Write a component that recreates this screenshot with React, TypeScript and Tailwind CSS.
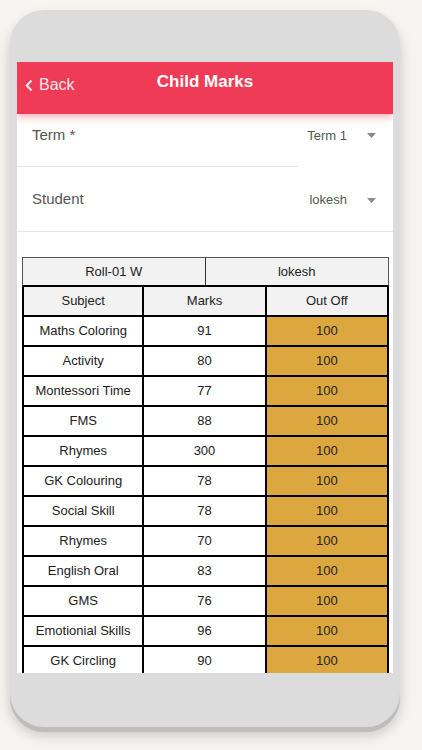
const rows: [string, string][] = [
  ["Maths Coloring", "91"],
  ["Activity", "80"],
  ["Montessori Time", "77"],
  ["FMS", "88"],
  ["Rhymes", "300"],
  ["GK Colouring", "78"],
  ["Social Skill", "78"],
  ["Rhymes", "70"],
  ["English Oral", "83"],
  ["GMS", "76"],
  ["Emotionial Skills", "96"],
  ["GK Circling", "90"],
];

function Caret() {
  return (
    <svg width="9" height="5" viewBox="0 0 9 5" className="fill-[#8a8a8a]">
      <path d="M0 0h9L4.5 5z" />
    </svg>
  );
}

export default function App() {
  return (
    <div
      className="w-[422px] h-[750px] bg-[#f7f5f1] pt-[10px] pl-[10px] overflow-hidden"
      style={{ fontFamily: '"Liberation Sans", Arial, sans-serif' }}
    >
      <div className="w-[390px] h-[717px] rounded-[34px] bg-[#dcdcdc] pt-[52px] px-[7px] shadow-[0_5px_0_#bdbdbd,0_8px_14px_rgba(0,0,0,0.2)]">
        <div className="h-[611px] bg-white overflow-hidden">
          <div className="relative h-[52px] bg-[#ef3b55] shadow-[0_4px_7px_rgba(239,59,85,0.35)]">
            <div className="flex items-center gap-[6px] pl-[8px] pt-[11px] text-[#fde5e9] text-[16px] leading-[24px]">
              <svg width="8" height="13" viewBox="0 0 8 13" fill="none" stroke="currentColor" strokeWidth="2.2">
                <path d="M6.5 1.5L1.8 6.5l4.7 5" />
              </svg>
              <span>Back</span>
            </div>
            <div className="absolute inset-x-0 top-[8px] text-center text-white font-bold text-[17px] leading-[24px]">Child Marks</div>
          </div>

          <div className="h-[53px] relative">
            <div className="flex justify-between items-start pt-[10px] pl-[15px] pr-[17px]">
              <span className="text-[15px] text-[#555]">Term *</span>
              <div className="flex items-center gap-[20px] pt-[2px]">
                <span className="text-[13px] text-[#555]">Term 1</span>
                <Caret />
              </div>
            </div>
            <div className="absolute left-0 bottom-0 w-[281px] border-b border-[#e6e6e6]" />
          </div>

          <div className="h-[65px] border-b border-[#e6e6e6] flex justify-between items-center pl-[15px] pr-[17px]">
            <span className="text-[15px] text-[#555]">Student</span>
            <div className="flex items-center gap-[20px] pt-[2px]">
              <span className="text-[13px] text-[#555]">lokesh</span>
              <Caret />
            </div>
          </div>

          <div className="pt-[25px] pl-[5px] w-[372px]">
            <div className="grid grid-cols-2 h-[30px] bg-[#f2f2f2] border border-[#555] border-b-2 border-b-black text-[13px] text-[#222]">
              <div className="flex items-center justify-center border-r border-[#333]">Roll-01 W</div>
              <div className="flex items-center justify-center">lokesh</div>
            </div>
            <div className="grid grid-cols-3 h-[30px] bg-[#f2f2f2] text-[13px] text-[#222]">
              <div className="flex items-center justify-center border-l-2 border-r-2 border-b-2 border-black">Subject</div>
              <div className="flex items-center justify-center border-r-2 border-b-2 border-black">Marks</div>
              <div className="flex items-center justify-center border-r-2 border-b-2 border-black">Out Off</div>
            </div>
            {rows.map(([subject, mark], i) => (
              <div key={i} className="grid grid-cols-3 h-[30px] text-[13px] text-[#222]">
                <div className="flex items-center justify-center border-l-2 border-r-2 border-b-2 border-black whitespace-nowrap">{subject}</div>
                <div className="flex items-center justify-center border-r-2 border-b-2 border-black">{mark}</div>
                <div className="flex items-center justify-center border-r-2 border-b-2 border-black bg-[#dca73f]">100</div>
              </div>
            ))}
          </div>
        </div>
      </div>
    </div>
  );
}
